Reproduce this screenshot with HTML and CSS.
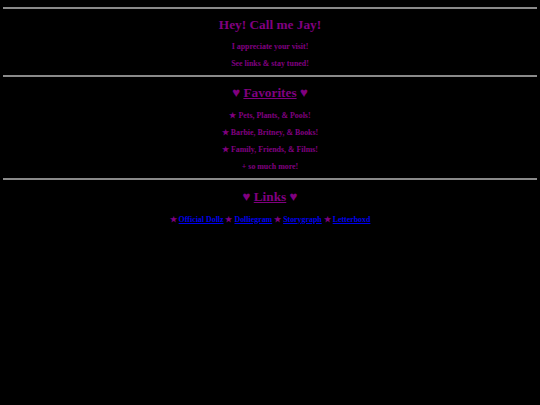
FILE: index.html
```html
<!DOCTYPE html>
<html>
<head>
<meta charset="utf-8">
<title>Jay</title>
<link rel="stylesheet" href="styles.css">
</head>
<body>
<div class="page">
  <hr class="rule">
  <section class="block">
    <h1 class="title">Hey! Call me Jay!</h1>
    <p class="note first">I appreciate your visit!</p>
    <p class="note last">See links &amp; stay tuned!</p>
  </section>
  <hr class="rule">
  <section class="block">
    <h2 class="heading">&#9829; <a class="head-link" href="#">Favorites</a> &#9829;</h2>
    <p class="note item-first">&#9733; Pets, Plants, &amp; Pools!</p>
    <p class="note">&#9733; Barbie, Britney, &amp; Books!</p>
    <p class="note">&#9733; Family, Friends, &amp; Films!</p>
    <p class="note last">+ so much more!</p>
  </section>
  <hr class="rule">
  <section class="block">
    <h2 class="heading links-head">&#9829; <a class="head-link" href="#">Links</a> &#9829;</h2>
    <p class="note links">&#9733; <a class="link" href="#">Official Dollz</a> &#9733; <a class="link" href="#">Dolliegram</a> &#9733; <a class="link" href="#">Storygraph</a> &#9733; <a class="link" href="#">Letterboxd</a></p>
  </section>
</div>
</body>
</html>
```
FILE: styles.css
```css
html, body {
  margin: 0;
  background: #000;
}
body {
  font-family: "Liberation Serif", "Times New Roman", serif;
  color: #800080;
  padding: 7px 3px 0;
}
.page {
  display: flex;
  flex-direction: column;
}
.rule {
  height: 2px;
  margin: 0;
  border: none;
  background: #8a8a8a;
}
.block {
  text-align: center;
}
.title {
  font-size: 13.3px;
  line-height: 15px;
  font-weight: bold;
  margin: 7.5px 0 0;
}
.heading {
  font-size: 13.3px;
  line-height: 15px;
  font-weight: bold;
  margin: 8px 0 0;
}
.heading.links-head {
  margin-top: 9px;
}
.head-link {
  color: #800080;
  text-decoration: underline;
}
.note {
  font-size: 7.9px;
  line-height: 9px;
  font-weight: bold;
  margin: 8px 0 0;
}
.note.first {
  margin-top: 10px;
}
.note.item-first {
  margin-top: 10.5px;
}
.note.last {
  margin-bottom: 7.5px;
}
.note.links {
  margin-top: 10.5px;
}
.link {
  color: #0000ee;
  text-decoration: underline;
}
```
